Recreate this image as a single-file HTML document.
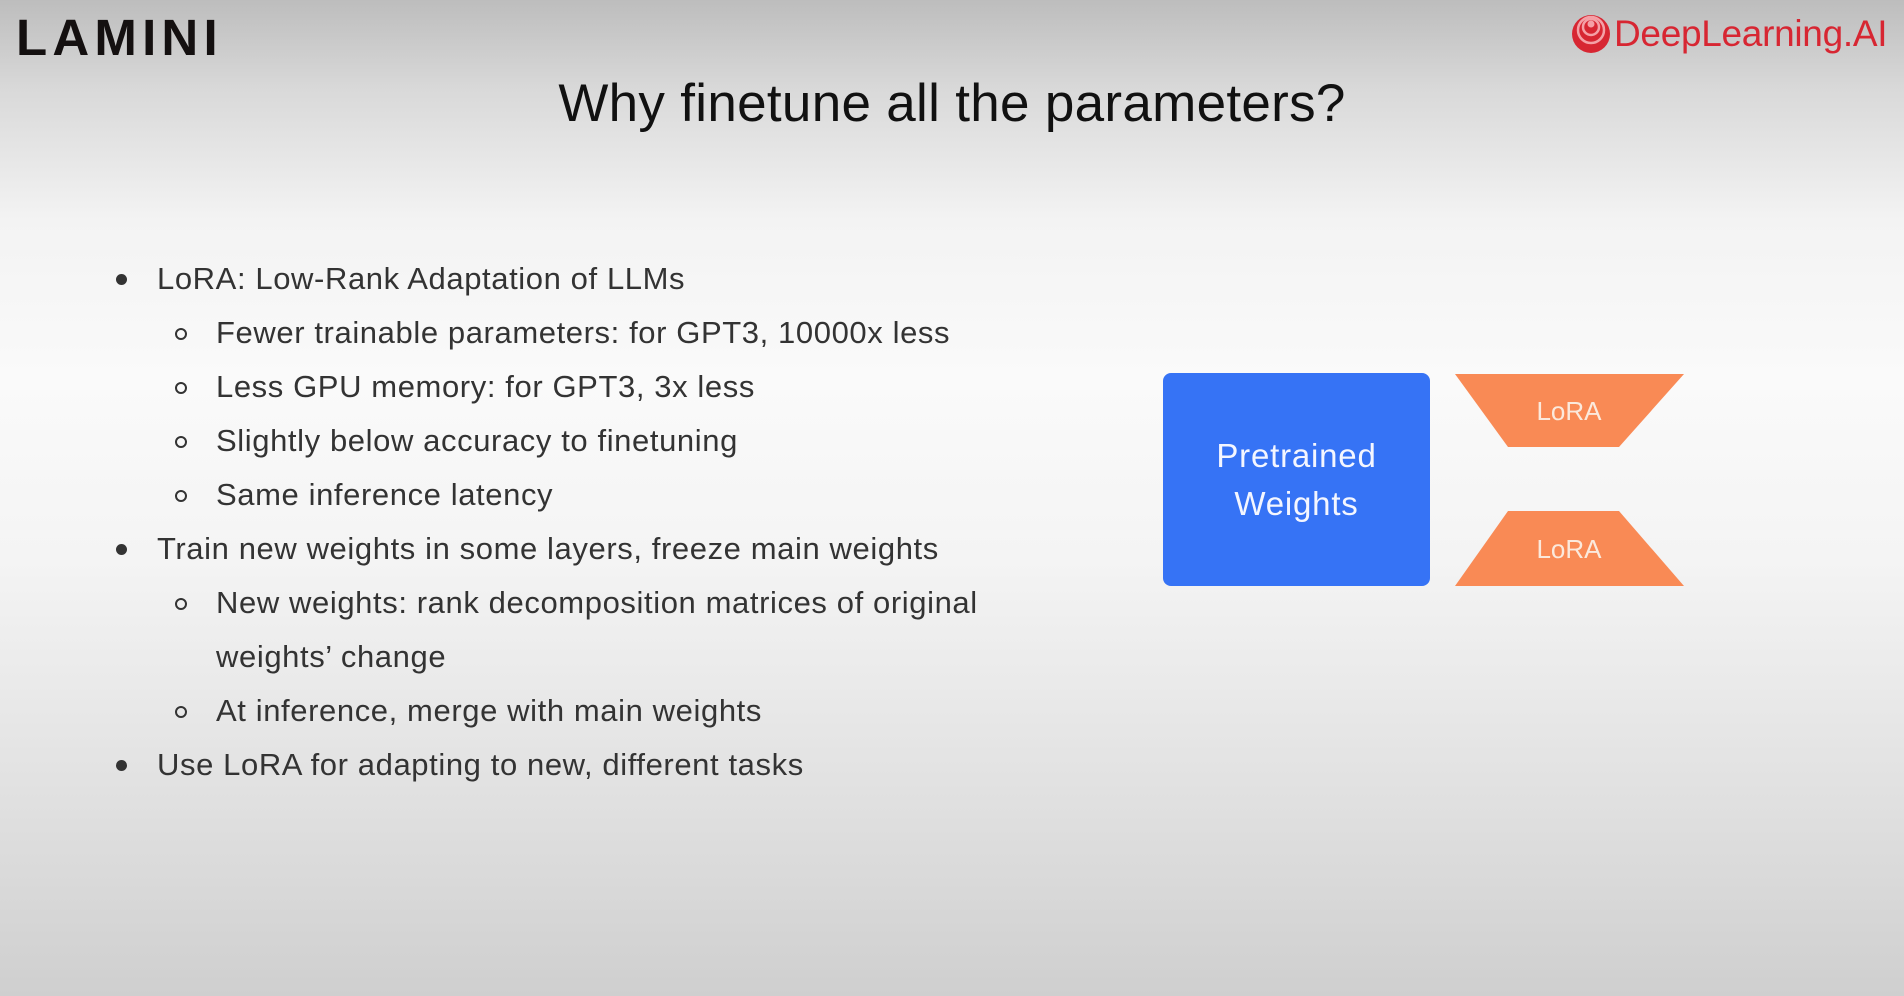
<!DOCTYPE html>
<html><head><meta charset="utf-8"><style>
html,body{margin:0;padding:0}
body{width:1904px;height:996px;position:relative;overflow:hidden;font-family:"Liberation Sans",sans-serif;
background:linear-gradient(180deg,#bdbdbd 0px,#d9d9d9 90px,#f3f3f3 220px,#fafafa 380px,#f4f4f4 560px,#e2e2e2 780px,#cfcfcf 996px);}
.lamini{position:absolute;left:16px;top:8px;font-size:51px;font-weight:bold;letter-spacing:5.2px;color:#141010;}
.dl{position:absolute;left:1570px;top:13px;display:flex;align-items:center;color:#d72632;font-size:37px;letter-spacing:-0.3px}
.title{position:absolute;left:0;width:1904px;top:73px;text-align:center;font-size:53px;color:#111;letter-spacing:0.3px}
.row{position:absolute;font-size:31px;color:#333;white-space:nowrap;letter-spacing:0.6px}
.dot{position:absolute;width:11px;height:11px;border-radius:50%;background:#333}
.circ{position:absolute;width:8px;height:8px;border-radius:50%;border:2px solid #333}
.box{position:absolute;left:1163px;top:373px;width:267px;height:213px;background:#3673f5;border-radius:8px;color:#f4f6ff;font-size:33px;text-align:center;display:flex;align-items:center;justify-content:center;line-height:48px;letter-spacing:0.8px}
</style></head><body>
<div class="lamini">LAMINI</div>
<div class="dl"><svg width="42" height="42" viewBox="0 0 42 42"><circle cx="21" cy="21" r="19" fill="#d72632"/><circle cx="21" cy="17" r="13" fill="none" stroke="#f4a0a6" stroke-width="2.5"/><circle cx="21" cy="14" r="8" fill="none" stroke="#f4a0a6" stroke-width="2.5"/><circle cx="21" cy="11" r="3.5" fill="#f4a0a6"/></svg><span style="margin-left:2px">DeepLearning.AI</span></div>
<div class="title">Why finetune all the parameters?</div>

<div class="dot" style="left:116px;top:274px"></div>
<div class="row" style="left:157px;top:261px">LoRA: Low-Rank Adaptation of LLMs</div>
<div class="circ" style="left:175px;top:328px"></div>
<div class="row" style="left:216px;top:315px">Fewer trainable parameters: for GPT3, 10000x less</div>
<div class="circ" style="left:175px;top:382px"></div>
<div class="row" style="left:216px;top:369px">Less GPU memory: for GPT3, 3x less</div>
<div class="circ" style="left:175px;top:436px"></div>
<div class="row" style="left:216px;top:423px">Slightly below accuracy to finetuning</div>
<div class="circ" style="left:175px;top:490px"></div>
<div class="row" style="left:216px;top:477px">Same inference latency</div>
<div class="dot" style="left:116px;top:544px"></div>
<div class="row" style="left:157px;top:531px">Train new weights in some layers, freeze main weights</div>
<div class="circ" style="left:175px;top:598px"></div>
<div class="row" style="left:216px;top:585px">New weights: rank decomposition matrices of original</div>
<div class="row" style="left:216px;top:639px">weights’ change</div>
<div class="circ" style="left:175px;top:706px"></div>
<div class="row" style="left:216px;top:693px">At inference, merge with main weights</div>
<div class="dot" style="left:116px;top:760px"></div>
<div class="row" style="left:157px;top:747px">Use LoRA for adapting to new, different tasks</div>

<div class="box">Pretrained<br>Weights</div>
<svg style="position:absolute;left:0;top:0" width="1904" height="996">
<polygon points="1455,374 1684,374 1619,447 1508,447" fill="#f98a55"/>
<polygon points="1508,511 1619,511 1684,586 1455,586" fill="#f98a55"/>
<text x="1569" y="420" text-anchor="middle" font-family="Liberation Sans, sans-serif" font-size="26" fill="#fbe9dc">LoRA</text>
<text x="1569" y="558" text-anchor="middle" font-family="Liberation Sans, sans-serif" font-size="26" fill="#fbe9dc">LoRA</text>
</svg>
</body></html>
